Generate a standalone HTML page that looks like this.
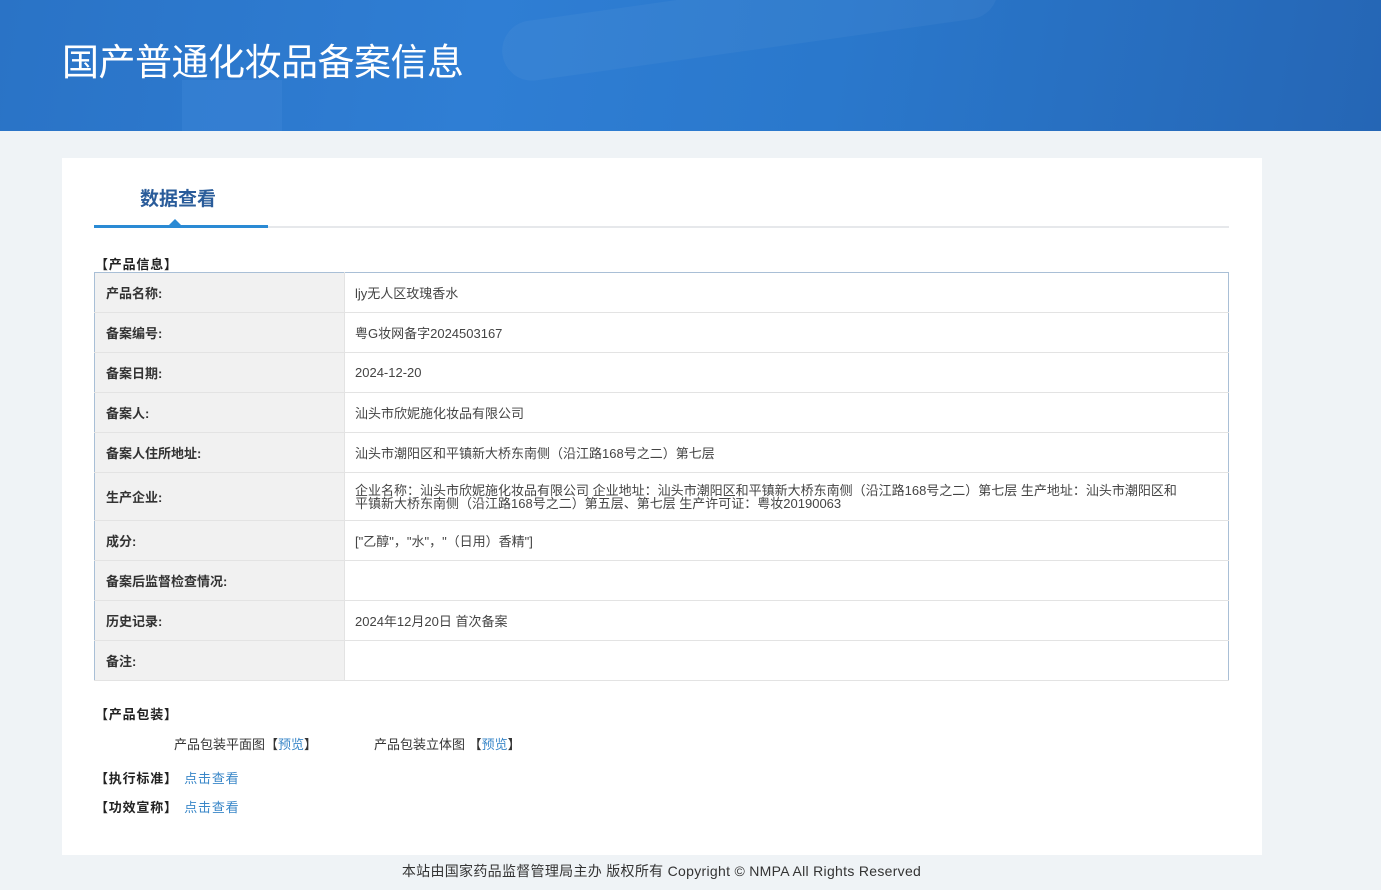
<!DOCTYPE html>
<html><head><meta charset="utf-8"><style>
*{margin:0;padding:0;box-sizing:border-box}
body{width:1381px;height:890px;background:#eff3f6;font-family:"Liberation Sans","Noto Sans CJK SC",sans-serif;font-size:13px;color:#333;position:relative;overflow:hidden}
.hd{position:absolute;left:0;top:0;width:1381px;height:131px;background:linear-gradient(100deg,#2a73c6 0%,#2f7ed4 35%,#2a78cc 60%,#2566b5 100%);overflow:hidden}
.hd .b{position:absolute;left:182px;top:80px;width:100px;height:51px;background:rgba(80,150,230,.2)}
.hd .c{position:absolute;left:500px;top:-10px;width:500px;height:60px;border-radius:40px;background:rgba(255,255,255,.04);transform:rotate(-8deg)}
.hd h1{position:absolute;left:62px;top:32px;color:#fff;font-size:37px;font-weight:normal;font-family:"Noto Sans CJK SC",sans-serif;letter-spacing:-0.5px}
.pn{position:absolute;left:62px;top:158px;width:1200px;height:697px;background:#fff}
.tab{position:absolute;left:78px;top:26px;font-size:19px;font-weight:bold;color:#2a5c9a}
.line{position:absolute;left:32px;top:68px;width:1135px;height:2px;background:#e6e8eb}
.line2{position:absolute;left:32px;top:67px;width:174px;height:3px;background:#2a8ad4}
.tri{position:absolute;left:107px;top:61px;width:0;height:0;border-left:6px solid transparent;border-right:6px solid transparent;border-bottom:6px solid #2a8ad4}
.sec{position:absolute;font-weight:bold;font-size:13px;color:#222;letter-spacing:0.8px}
table{position:absolute;left:32px;top:114px;width:1135px;border-collapse:collapse;border:1px solid #a9bfd6}
td{border-bottom:1px solid #e3e3e3;height:40px;vertical-align:middle;font-size:13px}
td.l{width:250px;background:#f1f1f1;font-weight:bold;padding-left:11px;color:#333;border-right:1px solid #e3e3e3}
td.v{padding-left:10px;color:#444}
a{color:#3a87c8;text-decoration:none}
.ft{position:absolute;top:861px;left:0;width:1323px;text-align:center;font-size:14px;color:#333;letter-spacing:0.3px}
</style></head><body>
<div class="hd"><div class="b"></div><div class="c"></div><h1>国产普通化妆品备案信息</h1></div>
<div class="pn">
<div class="tab">数据查看</div>
<div class="line"></div><div class="line2"></div><div class="tri"></div>
<div class="sec" style="left:33px;top:96px">【产品信息】</div>
<table>
<tr><td class="l">产品名称:</td><td class="v">ljy无人区玫瑰香水</td></tr>
<tr><td class="l">备案编号:</td><td class="v">粤G妆网备字2024503167</td></tr>
<tr><td class="l">备案日期:</td><td class="v">2024-12-20</td></tr>
<tr><td class="l">备案人:</td><td class="v">汕头市欣妮施化妆品有限公司</td></tr>
<tr><td class="l">备案人住所地址:</td><td class="v">汕头市潮阳区和平镇新大桥东南侧（沿江路168号之二）第七层</td></tr>
<tr><td class="l" style="height:48px">生产企业:</td><td class="v" style="line-height:13px;padding-right:50px">企业名称：汕头市欣妮施化妆品有限公司 企业地址：汕头市潮阳区和平镇新大桥东南侧（沿江路168号之二）第七层 生产地址：汕头市潮阳区和平镇新大桥东南侧（沿江路168号之二）第五层、第七层 生产许可证：粤妆20190063</td></tr>
<tr><td class="l">成分:</td><td class="v">["乙醇"，"水"，"（日用）香精"]</td></tr>
<tr><td class="l">备案后监督检查情况:</td><td class="v"></td></tr>
<tr><td class="l">历史记录:</td><td class="v">2024年12月20日 首次备案</td></tr>
<tr><td class="l">备注:</td><td class="v"></td></tr>
</table>
<div class="sec" style="left:33px;top:546px">【产品包装】</div>
<div style="position:absolute;left:112px;top:576px">产品包装平面图【<a>预览</a>】</div>
<div style="position:absolute;left:312px;top:576px">产品包装立体图 【<a>预览</a>】</div>
<div class="sec" style="left:33px;top:610px">【执行标准】 <a style="font-weight:normal;margin-left:2px">点击查看</a></div>
<div class="sec" style="left:33px;top:639px">【功效宣称】 <a style="font-weight:normal;margin-left:2px">点击查看</a></div>
</div>
<div class="ft">本站由国家药品监督管理局主办 版权所有 Copyright © NMPA All Rights Reserved</div>
</body></html>
